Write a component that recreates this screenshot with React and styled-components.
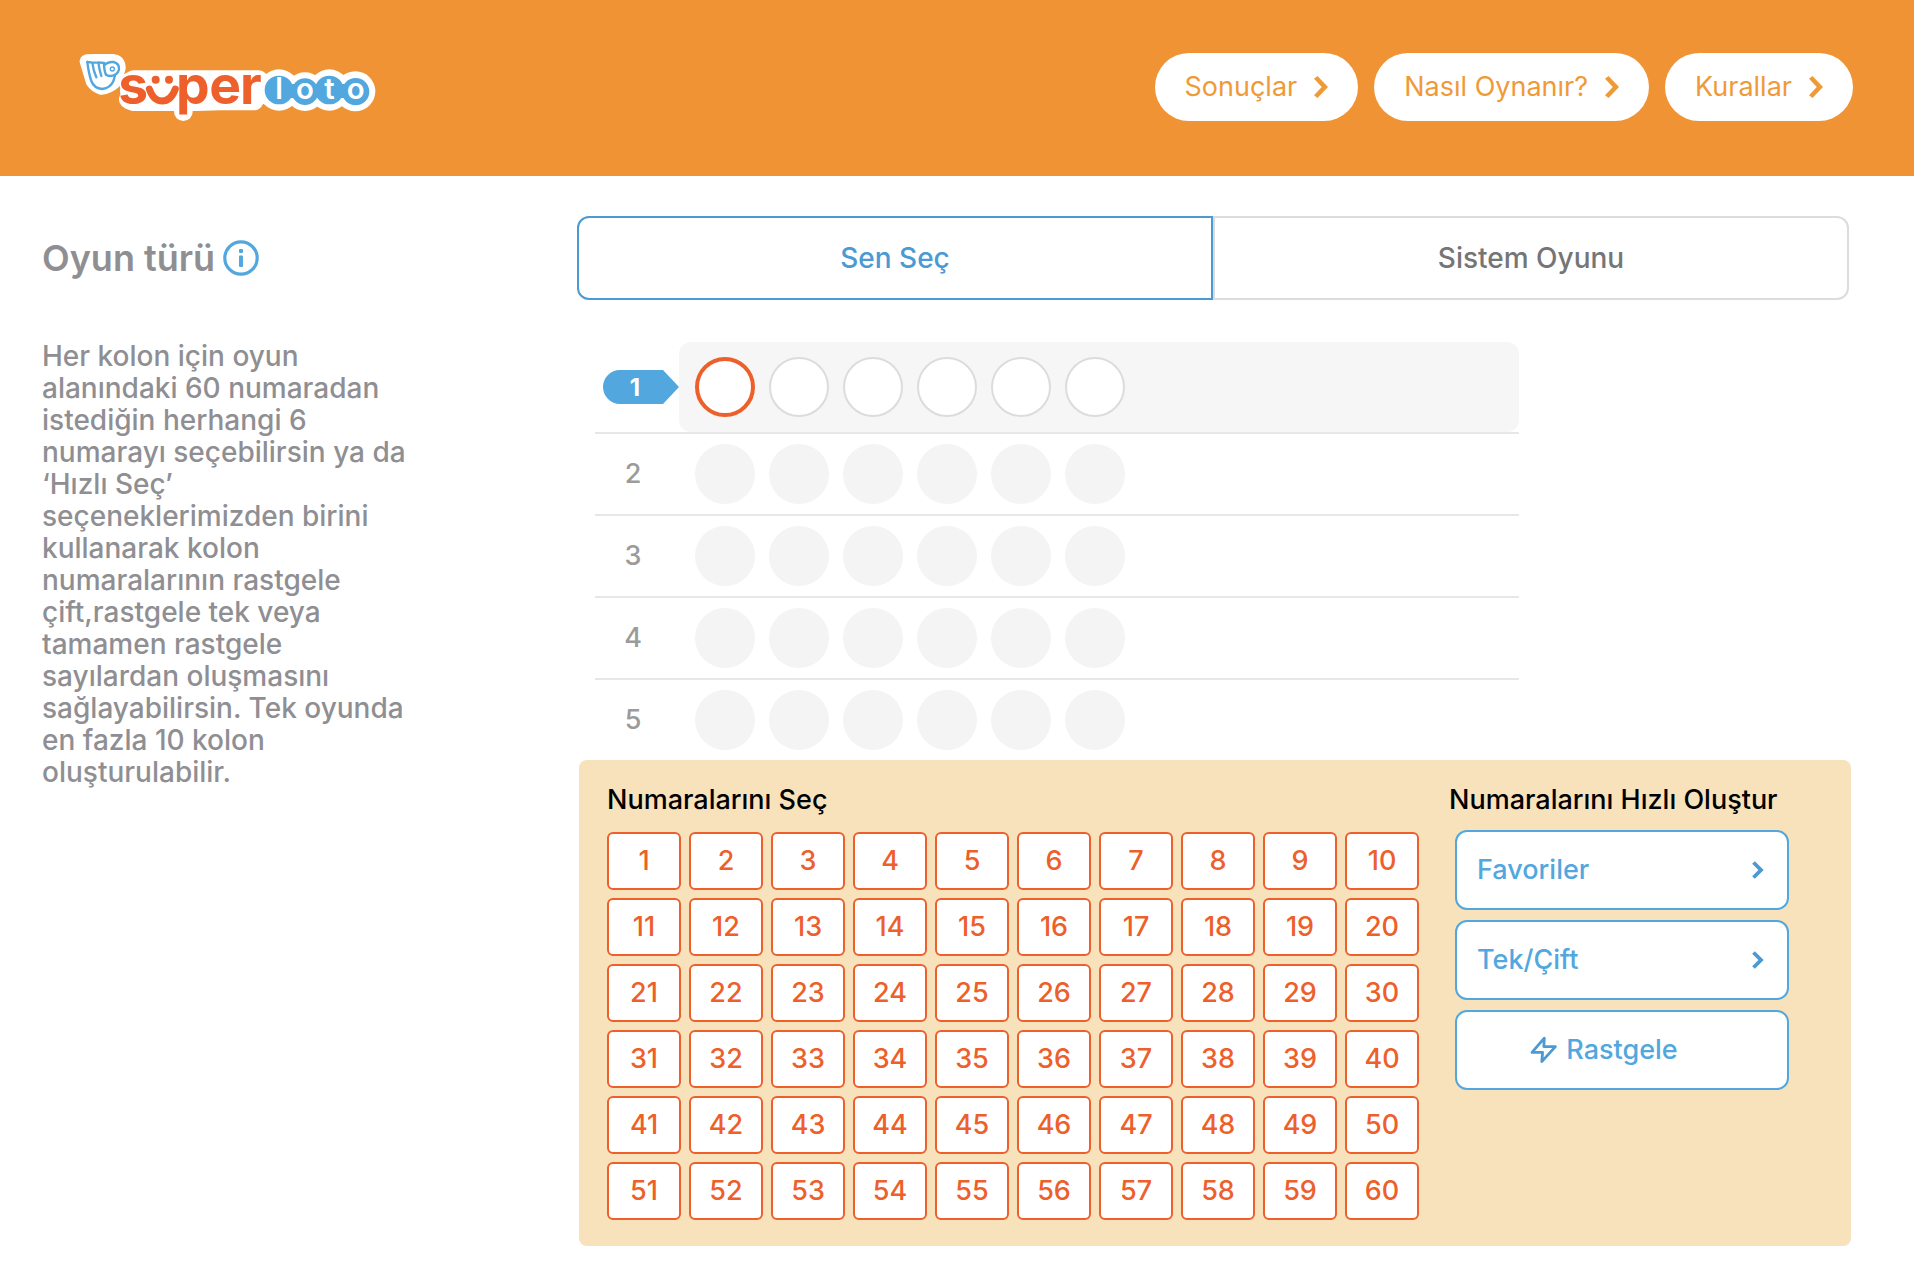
import { useState } from "react";
import styled, { createGlobalStyle } from "styled-components";

const GlobalStyle = createGlobalStyle`
  * {
    box-sizing: border-box;
  }

  body {
    margin: 0;
    background: #ffffff;
    font-family: Inter, "Liberation Sans", sans-serif;
    font-size: 27px;
    font-weight: 500;
    line-height: 32px;
  }

  button {
    font: inherit;
    cursor: pointer;
  }
`;

const Header = styled.header`
  display: flex;
  align-items: center;
  justify-content: space-between;
  height: 176px;
  padding: 0 61px 2px 78px;
  background: #ef9335;
`;

const LogoSvg = styled.svg`
  overflow: visible;
`;

const Nav = styled.nav`
  display: flex;
  gap: 16px;
`;

const NavLink = styled.a`
  display: flex;
  align-items: center;
  gap: 17px;
  height: 68px;
  padding: 0 30px;
  border-radius: 34px;
  background: #ffffff;
  color: #f09a37;
  font-weight: 400;
  text-decoration: none;
`;

const Main = styled.main`
  display: grid;
  grid-template-columns: 535px 1fr;
  padding: 40px 63px 22px 42px;
`;

const Sidebar = styled.aside`
  color: #8f8f93;
`;

const GameType = styled.h1`
  display: flex;
  align-items: center;
  gap: 8px;
  height: 84px;
  margin: 0 0 40px;
  font-size: 36px;
  font-weight: 600;
`;

const InfoButton = styled.button`
  display: flex;
  padding: 0;
  border: 0;
  background: none;
`;

const Description = styled.p`
  width: 370px;
  margin: 0;
  font-size: 28px;
`;

const Tabs = styled.div`
  display: flex;
  margin-right: 2px;
`;

const Tab = styled.button`
  flex: 1;
  height: 84px;
  border: 2px solid ${(props) => (props.$active ? "#4b9ad4" : "#dcdcdc")};
  background: #ffffff;
  color: ${(props) => (props.$active ? "#4b9ad4" : "#757575")};
  font-size: 28px;

  &:first-child {
    border-radius: 12px 0 0 12px;
  }

  &:last-child {
    border-radius: 0 12px 12px 0;
  }
`;

const Columns = styled.ol`
  max-width: 924px;
  margin: 42px 0 0 18px;
  padding: 0;
  list-style: none;
`;

const Column = styled.li`
  display: flex;
  align-items: center;

  & + & {
    border-top: 2px solid #e7e7e7;
  }
`;

const ColumnLabel = styled.div`
  display: flex;
  width: 84px;
  padding-left: 8px;
  color: #9b9b9b;
`;

const ColumnNumber = styled.span`
  width: 60px;
  text-align: center;
`;

const ActiveNumber = styled.span`
  width: 76px;
  height: 34px;
  padding-right: 12px;
  border-radius: 17px 0 0 17px;
  background: #51a7de;
  clip-path: polygon(0 0, 60px 0, 100% 50%, 60px 100%, 0 100%);
  color: #ffffff;
  font-size: 24px;
  font-weight: 700;
  line-height: 36px;
  text-align: center;
`;

const Slots = styled.div`
  display: flex;
  flex: 1;
  align-items: center;
  gap: 14px;
  height: ${(props) => (props.$active ? 90 : 80)}px;
  padding: 0 16px;
  border-radius: 12px;
  background: ${(props) => (props.$active ? "#f6f6f6" : "none")};
`;

const slotBorders = {
  current: "4px solid #ed5f2b",
  open: "2px solid #dcdcdc",
  idle: "0",
};

const Slot = styled.span`
  width: 60px;
  height: 60px;
  border: ${(props) => slotBorders[props.$state]};
  border-radius: 50%;
  background: ${(props) => (props.$state === "idle" ? "#f4f4f4" : "#ffffff")};
`;

const Panel = styled.section`
  display: grid;
  grid-template-columns: 1fr 340px;
  gap: 30px;
  margin-left: 2px;
  padding: 24px 62px 26px 28px;
  border-radius: 8px;
  background: #f8e2bc;
`;

const PanelTitle = styled.h2`
  margin: 0 0 14px;
  color: #000000;
  font-size: 27px;
  font-weight: 500;
  white-space: nowrap;
`;

const NumberGrid = styled.div`
  display: grid;
  grid-template-columns: repeat(10, 1fr);
  gap: 8px;
  padding-top: 2px;
`;

const NumberButton = styled.button`
  height: 58px;
  padding: 0;
  border: 2px solid #ed5f2b;
  border-radius: 6px;
  background: #ffffff;
  color: #ed5f2b;
`;

const QuickList = styled.div`
  display: flex;
  flex-direction: column;
  gap: 10px;
  margin-left: 6px;
`;

const QuickButton = styled.button`
  display: flex;
  align-items: center;
  justify-content: space-between;
  height: 80px;
  padding: 0 23px 0 20px;
  border: 2px solid #51a7de;
  border-radius: 12px;
  background: #ffffff;
  color: #51a7de;
`;

const RandomButton = styled(QuickButton)`
  justify-content: center;
  gap: 8px;
  padding-right: 56px;
`;

const Logo = () => (
  <LogoSvg width="300" height="70" viewBox="54 36 900 210" role="img" aria-label="Milli Piyango Süper Loto">
    <g fill="#ffffff" stroke="#ffffff" strokeLinejoin="round" strokeLinecap="round">
      <path d="M80 64L106 63L158 63Q176 64 176 84L162 126Q145 142 124 143Q107 138 98 124Z" strokeWidth="42" />
      <path d="M206 128L222 120H596M206 178L222 184H410L480 182H582" strokeWidth="58" />
      <path d="M220 152H900" strokeWidth="80" />
      <path d="M370 130V215" strokeWidth="56" />
      <circle cx="657" cy="150" r="62" stroke="none" />
      <circle cx="735" cy="155" r="58" stroke="none" />
      <circle cx="808" cy="150" r="62" stroke="none" />
      <circle cx="886" cy="154" r="60" stroke="none" />
    </g>
    <g fill="none" stroke="#51a7de" strokeWidth="7" strokeLinecap="round" strokeLinejoin="round">
      <path d="M82 66Q86 100 94 123Q102 145 127 147Q151 144 160 124L165 106" />
      <path d="M82 66L97 68Q100 92 109 112M97 68L115 67Q118 90 124 108M115 67L132 69Q132 92 138 104" />
      <path d="M132 76Q143 65 160 66Q179 70 177 89Q172 104 158 107Q145 110 138 104" />
      <circle cx="157" cy="87" r="6" strokeWidth="4" />
    </g>
    <g fill="#ed5f2b" fontFamily="Inter, sans-serif" fontWeight="700" fontSize="160">
      <text x="175" y="193">s</text>
      <text x="348 448 540" y="193">per</text>
      <circle cx="287" cy="119" r="12" />
      <circle cx="327" cy="119" r="12" />
      <path d="M268 147Q280 183 306 183Q333 183 346 147" fill="none" stroke="#ed5f2b" strokeWidth="21" strokeLinecap="round" />
    </g>
    <g fill="#51a7de">
      <circle cx="657" cy="150" r="43" />
      <circle cx="735" cy="155" r="40" />
      <circle cx="808" cy="150" r="43" />
      <circle cx="887" cy="155" r="41" />
      <path d="M657 132H887V174H657Z" />
    </g>
    <g fill="#ffffff" fontFamily="Inter, sans-serif" fontWeight="600" fontSize="88" textAnchor="middle">
      <text x="657" y="178">l</text>
      <text x="735" y="178">o</text>
      <text x="808" y="178">t</text>
      <text x="887" y="178">o</text>
    </g>
  </LogoSvg>
);

const BoldChevron = () => (
  <svg width="14" height="22" viewBox="0 0 14 22" fill="currentColor" aria-hidden="true">
    <path d="M3.5 0L14 11L3.5 22L0 19.2L7.8 11L0 2.8Z" />
  </svg>
);

const Chevron = () => (
  <svg width="12" height="18" viewBox="0 0 12 18" fill="none" aria-hidden="true">
    <path d="M1.5 1.5L9 9L1.5 16.5" stroke="#4b9ad4" strokeWidth="3.8" />
  </svg>
);

const InfoIcon = () => (
  <svg width="36" height="36" viewBox="0 0 36 36" aria-hidden="true">
    <circle cx="18" cy="18" r="16.2" fill="none" stroke="#51a7de" strokeWidth="3.2" />
    <rect x="16" y="9" width="4" height="4" rx="1" fill="#51a7de" />
    <rect x="16" y="15.6" width="4" height="11.4" rx="1" fill="#51a7de" />
  </svg>
);

const Bolt = () => (
  <svg width="28" height="28" viewBox="0 0 28 28" fill="none" aria-hidden="true">
    <path
      d="M14.3 2.2L2 16.4H12.6L11.8 25.6L25.4 10.6H13.8Z"
      stroke="#4b9ad4"
      strokeWidth="2.8"
      strokeLinejoin="round"
    />
  </svg>
);

const links = ["Sonuçlar", "Nasıl Oynanır?", "Kurallar"];
const tabs = ["Sen Seç", "Sistem Oyunu"];
const columns = [1, 2, 3, 4, 5];
const slots = [0, 1, 2, 3, 4, 5];
const numbers = Array.from({ length: 60 }, (_, i) => i + 1);

const slotState = (column, slot) => {
  if (column !== 1) return "idle";
  return slot === 0 ? "current" : "open";
};

const App = () => {
  const [activeTab, setActiveTab] = useState(tabs[0]);

  return (
    <>
      <GlobalStyle />
      <Header>
        <Logo />
        <Nav>
          {links.map((link) => (
            <NavLink key={link} href="#">
              {link}
              <BoldChevron />
            </NavLink>
          ))}
        </Nav>
      </Header>
      <Main>
        <Sidebar>
          <GameType>
            Oyun türü
            <InfoButton aria-label="Bilgi">
              <InfoIcon />
            </InfoButton>
          </GameType>
          <Description>
            Her kolon için oyun alanındaki 60 numaradan istediğin herhangi 6
            numarayı seçebilirsin ya da ‘Hızlı Seç’ seçeneklerimizden birini
            kullanarak kolon numaralarının rastgele çift,rastgele tek veya
            tamamen rastgele sayılardan oluşmasını sağlayabilirsin. Tek oyunda
            en fazla 10 kolon oluşturulabilir.
          </Description>
        </Sidebar>
        <div>
          <Tabs>
            {tabs.map((tab) => (
              <Tab
                key={tab}
                $active={tab === activeTab}
                onClick={() => setActiveTab(tab)}
              >
                {tab}
              </Tab>
            ))}
          </Tabs>
          <Columns>
            {columns.map((column) => (
              <Column key={column}>
                <ColumnLabel>
                  {column === 1 ? (
                    <ActiveNumber>{column}</ActiveNumber>
                  ) : (
                    <ColumnNumber>{column}</ColumnNumber>
                  )}
                </ColumnLabel>
                <Slots $active={column === 1}>
                  {slots.map((slot) => (
                    <Slot key={slot} $state={slotState(column, slot)} />
                  ))}
                </Slots>
              </Column>
            ))}
          </Columns>
          <Panel>
            <div>
              <PanelTitle>Numaralarını Seç</PanelTitle>
              <NumberGrid>
                {numbers.map((number) => (
                  <NumberButton key={number}>{number}</NumberButton>
                ))}
              </NumberGrid>
            </div>
            <div>
              <PanelTitle>Numaralarını Hızlı Oluştur</PanelTitle>
              <QuickList>
                <QuickButton>
                  Favoriler
                  <Chevron />
                </QuickButton>
                <QuickButton>
                  Tek/Çift
                  <Chevron />
                </QuickButton>
                <RandomButton>
                  <Bolt />
                  Rastgele
                </RandomButton>
              </QuickList>
            </div>
          </Panel>
        </div>
      </Main>
    </>
  );
};

export default App;
